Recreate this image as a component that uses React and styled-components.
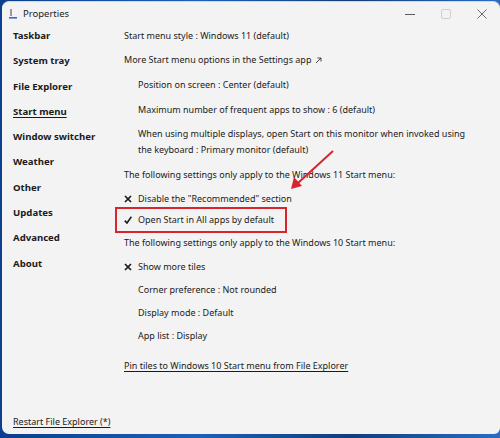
import styled, { createGlobalStyle } from "styled-components";

const GlobalStyle = createGlobalStyle`
  html, body {
    margin: 0;
    padding: 0;
    background: #174d9e;
  }
  body {
    width: 500px;
    height: 438px;
    overflow: hidden;
    font-family: "Noto Sans", "Open Sans", sans-serif;
    color: #1b1b1b;
  }
`;

const Desktop = styled.div`
  width: 500px;
  height: 438px;
  padding: 1px 0 4px 2px;
  box-sizing: border-box;
  background: linear-gradient(90deg, #0c3f8c 0%, #1f5fb8 40%, #123d7a 70%, #2b6cc4 100%);
`;

const Window = styled.div`
  position: relative;
  height: 100%;
  background: #f3f3f3;
  border-radius: 7px 7px 6px 7px;
  border-top: 1px solid #d6d6d6;
  box-sizing: border-box;
  display: flex;
  flex-direction: column;
`;

const TitleBar = styled.div`
  height: 23px;
  display: flex;
  align-items: center;
  padding-left: 6px;
  font-size: 9.5px;
`;

const TitleText = styled.span`
  margin-left: 5px;
`;

const Controls = styled.div`
  margin-left: auto;
  display: flex;
  height: 100%;
`;

const ControlButton = styled.div`
  width: 36px;
  height: 100%;
  display: flex;
  align-items: center;
  justify-content: center;
  color: ${(p) => (p.$disabled ? "#cfcfcf" : "#5a5a5a")};
`;

const Body = styled.div`
  flex: 1;
  display: flex;
  min-height: 0;
`;

const Sidebar = styled.div`
  width: 111px;
  padding: 3px 0 4px 11px;
  box-sizing: border-box;
  display: flex;
  flex-direction: column;
  gap: 9.3px;
`;

const NavItem = styled.div`
  font-weight: 700;
  font-size: 9.6px;
  line-height: 16px;
  text-decoration: ${(p) => (p.$active ? "underline" : "none")};
  text-underline-offset: 2px;
  white-space: nowrap;
`;

const FooterLink = styled.div`
  margin-top: auto;
  font-size: 9px;
  line-height: 16px;
  text-decoration: underline;
  text-underline-offset: 2px;
`;

const Main = styled.div`
  flex: 1;
  padding: 3px 24px 0 11px;
  display: flex;
  flex-direction: column;
`;

const Row = styled.div`
  position: relative;
  display: flex;
  align-items: flex-start;
  font-size: 9px;
  line-height: 16px;
  margin-top: ${(p) => p.$space || 0}px;
  padding-left: ${(p) => (p.$indent ? 14 : 0)}px;
  text-decoration: ${(p) => (p.$link ? "underline" : "none")};
  text-underline-offset: 2px;
`;

const Mark = styled.span`
  width: 14px;
  flex: none;
  height: 16px;
  display: flex;
  align-items: center;
`;

const Highlight = styled.div`
  position: absolute;
  left: -9px;
  top: -5px;
  width: 172px;
  height: 26px;
  border: 2px solid #d8242b;
  box-sizing: border-box;
  pointer-events: none;
`;

const Annotation = styled.svg`
  position: absolute;
  left: 0;
  top: 0;
  pointer-events: none;
`;

const CrossIcon = () => (
  <svg width="8" height="8" viewBox="0 0 8 8">
    <path d="M1 1 L7 7 M7 1 L1 7" stroke="#1b1b1b" strokeWidth="1.7" />
  </svg>
);

const CheckIcon = () => (
  <svg width="8" height="8" viewBox="0 0 8 8">
    <path d="M0.8 4.6 L3 7 L7.4 0.8" stroke="#1b1b1b" strokeWidth="1.6" fill="none" />
  </svg>
);

const ExternalIcon = () => (
  <svg width="7" height="7" viewBox="0 0 7 7" style={{ marginLeft: 4, marginTop: 5 }}>
    <path d="M1 6 L6 1 M2.5 1 H6 V4.5" stroke="#333" strokeWidth="0.9" fill="none" />
  </svg>
);

const AppIcon = () => (
  <svg width="10" height="12" viewBox="0 0 10 12">
    <rect x="2" y="1" width="2" height="7" fill="#9a9a9a" />
    <rect x="1" y="9" width="8" height="1.6" fill="#2f6fd0" />
  </svg>
);

const nav = [
  "Taskbar",
  "System tray",
  "File Explorer",
  "Start menu",
  "Window switcher",
  "Weather",
  "Other",
  "Updates",
  "Advanced",
  "About",
];

const rows = [
  { text: "Start menu style : Windows 11 (default)", space: 0 },
  { text: "More Start menu options in the Settings app", space: 8, external: true },
  { text: "Position on screen : Center (default)", space: 9, indent: true },
  { text: "Maximum number of frequent apps to show : 6 (default)", space: 9, indent: true },
  {
    text: "When using multiple displays, open Start on this monitor when invoked using the keyboard : Primary monitor (default)",
    space: 8,
    indent: true,
  },
  { text: "The following settings only apply to the Windows 11 Start menu:", space: 9 },
  { text: 'Disable the "Recommended" section', space: 8, mark: "x" },
  { text: "Open Start in All apps by default", space: 5, mark: "check", highlight: true },
  { text: "The following settings only apply to the Windows 10 Start menu:", space: 7 },
  { text: "Show more tiles", space: 8, mark: "x" },
  { text: "Corner preference : Not rounded", space: 7, indent: true },
  { text: "Display mode : Default", space: 7, indent: true },
  { text: "App list : Display", space: 7, indent: true },
  { text: "Pin tiles to Windows 10 Start menu from File Explorer", space: 14, link: true },
];

export default function App() {
  return (
    <>
      <GlobalStyle />
      <Desktop>
        <Window>
          <TitleBar>
            <AppIcon />
            <TitleText>Properties</TitleText>
            <Controls>
              <ControlButton>
                <svg width="10" height="10" viewBox="0 0 10 10">
                  <path d="M0 5.5 H10" stroke="currentColor" strokeWidth="1" />
                </svg>
              </ControlButton>
              <ControlButton $disabled>
                <svg width="10" height="10" viewBox="0 0 10 10">
                  <rect x="0.5" y="0.5" width="9" height="9" rx="1.5" stroke="currentColor" fill="none" />
                </svg>
              </ControlButton>
              <ControlButton>
                <svg width="10" height="10" viewBox="0 0 10 10">
                  <path d="M0.5 0.5 L9.5 9.5 M9.5 0.5 L0.5 9.5" stroke="currentColor" strokeWidth="0.9" />
                </svg>
              </ControlButton>
            </Controls>
          </TitleBar>
          <Body>
            <Sidebar>
              {nav.map((n) => (
                <NavItem key={n} $active={n === "Start menu"}>
                  {n}
                </NavItem>
              ))}
              <FooterLink>Restart File Explorer (*)</FooterLink>
            </Sidebar>
            <Main>
              {rows.map((r) => (
                <Row
                  key={r.text}
                  $space={r.space}
                  $indent={r.indent}
                  $link={r.link}
                >
                  {r.mark && <Mark>{r.mark === "x" ? <CrossIcon /> : <CheckIcon />}</Mark>}
                  <span>{r.text}</span>
                  {r.external && <ExternalIcon />}
                  {r.highlight && <Highlight />}
                </Row>
              ))}
            </Main>
          </Body>
          <Annotation width="498" height="433" viewBox="0 0 498 433">
            <path d="M331 149 L296 181" stroke="#d8242b" strokeWidth="2" />
            <path d="M289 187 L292 175 L300 184 Z" fill="#d8242b" />
          </Annotation>
        </Window>
      </Desktop>
    </>
  );
}
